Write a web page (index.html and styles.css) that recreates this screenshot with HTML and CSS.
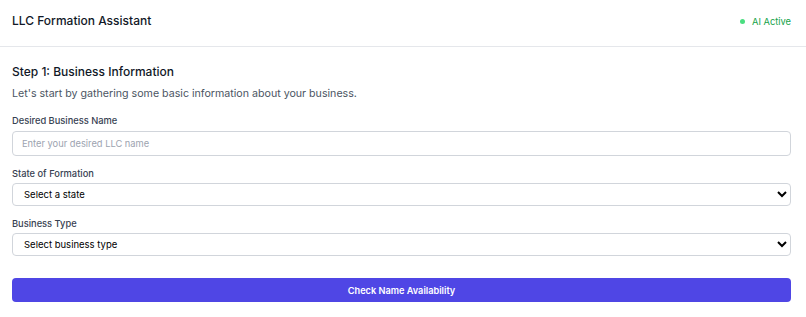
FILE: index.html
```html
<!DOCTYPE html>
<html lang="en">
<head>
  <meta charset="UTF-8">
  <meta name="viewport" content="width=device-width, initial-scale=1.0">
  <title>LLC Formation Assistant</title>
  <link rel="stylesheet" href="styles.css">
</head>
<body>

<div class="app">
  <div class="top-bar">
    <h1>LLC Formation Assistant</h1>
    <div class="status"><span class="dot"></span>AI Active</div>
  </div>

  <div class="step">
    <h2>Step 1: Business Information</h2>
    <p class="intro">Let's start by gathering some basic information about your business.</p>

    <div class="field">
      <label for="bizName">Desired Business Name</label>
      <input type="text" id="bizName" placeholder="Enter your desired LLC name">
    </div>

    <div class="field">
      <label for="state">State of Formation</label>
      <select id="state">
        <option>Select a state</option>
        <option>Delaware</option>
        <option>Wyoming</option>
      </select>
    </div>

    <div class="field">
      <label for="bizType">Business Type</label>
      <select id="bizType">
        <option>Select business type</option>
        <option>Single-member LLC</option>
        <option>Multi-member LLC</option>
      </select>
    </div>

    <button class="check-btn">Check Name Availability</button>
  </div>
</div>

</body>
</html>
```

FILE: styles.css
```css
body {
    font-family: 'Inter', 'Liberation Sans', sans-serif;
    margin: 0;
    background: #fff;
    color: #111827;
}
.top-bar {
    display: flex;
    align-items: center;
    justify-content: space-between;
    height: 47px;
    padding: 0 15px 4px 12px;
    box-sizing: border-box;
    border-bottom: 1px solid #e5e7eb;
}
.top-bar h1 {
    margin: 0;
    font-size: 12px;
    font-weight: 500;
    line-height: 20px;
}
.status {
    display: flex;
    align-items: center;
    font-size: 9.3px;
    color: #16a34a;
}
.dot {
    width: 5px;
    height: 5px;
    border-radius: 50%;
    background: #4ade80;
    margin-right: 7px;
}
.step {
    padding: 15px 15px 0 12px;
}
.step h2 {
    margin: 0 0 4px;
    font-size: 12px;
    font-weight: 500;
    line-height: 20px;
}
.intro {
    margin: 0 0 12px;
    font-size: 10.65px;
    line-height: 16px;
    color: #4b5563;
}
.field {
    margin-bottom: 11px;
}
.field label {
    display: block;
    font-size: 9.3px;
    font-weight: 500;
    line-height: 14px;
    color: #374151;
    margin-bottom: 2px;
}
.field input {
    display: block;
    width: 100%;
    height: 25px;
    box-sizing: border-box;
    padding: 0 9px;
    border: 1px solid #d1d5db;
    border-radius: 4px;
    font-family: inherit;
    font-size: 9.3px;
    color: #111827;
    margin-top: 3px;
}
.field input::placeholder {
    color: #9ca3af;
}
.field select {
    display: block;
    width: 100%;
    height: 23px;
    box-sizing: border-box;
    padding: 0 7px;
    border: 1px solid #d1d5db;
    border-radius: 4px;
    background: #fff;
    font-family: inherit;
    font-size: 9.5px;
    color: #000;
}
.check-btn {
    display: block;
    width: 100%;
    height: 24px;
    margin-top: 22px;
    border: none;
    border-radius: 4px;
    background-color: #4f46e5;
    color: #fff;
    font-family: inherit;
    font-size: 9.2px;
    font-weight: 600;
    cursor: pointer;
}
.check-btn:hover {
    background-color: #4338ca;
}
```
